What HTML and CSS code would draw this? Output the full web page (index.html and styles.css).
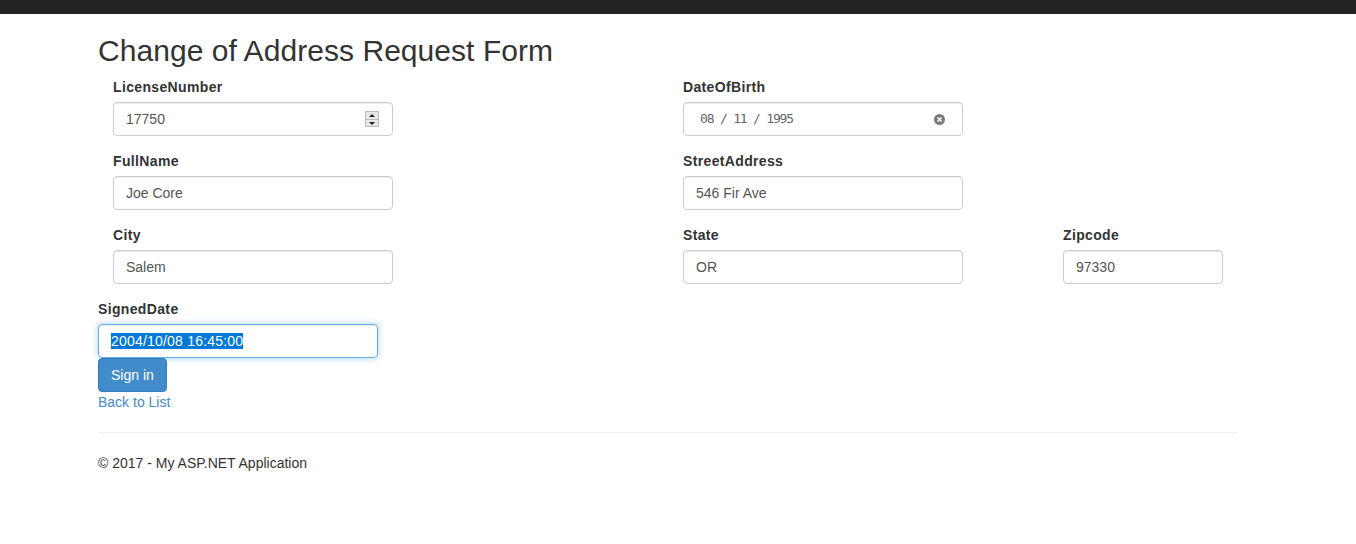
FILE: index.html
```html
<!DOCTYPE html>
<html>
<head>
<meta charset="utf-8">
<title>Change of Address Request Form</title>
<link rel="stylesheet" href="styles.css">
</head>
<body>
<div class="navbar"></div>
<div class="container">
  <h2 class="title">Change of Address Request Form</h2>
  <div class="row">
    <div class="col col-half">
      <label class="lbl">LicenseNumber</label>
      <div class="field">
        <span class="val">17750</span>
        <span class="spinner"><span class="spin-btn up"></span><span class="spin-btn down"></span></span>
      </div>
    </div>
    <div class="col col-half">
      <label class="lbl">DateOfBirth</label>
      <div class="field">
        <span class="date">08 / 11 / 1995</span>
        <span class="clear-icon">
          <svg width="11" height="11" viewBox="0 0 11 11"><circle cx="5.5" cy="5.5" r="5.5" fill="#7b7b7b"/><path d="M3.5 3.5 L7.5 7.5 M7.5 3.5 L3.5 7.5" stroke="#fff" stroke-width="1.6"/></svg>
        </span>
      </div>
    </div>
  </div>
  <div class="row">
    <div class="col col-half">
      <label class="lbl">FullName</label>
      <div class="field"><span class="val">Joe Core</span></div>
    </div>
    <div class="col col-half">
      <label class="lbl">StreetAddress</label>
      <div class="field"><span class="val">546 Fir Ave</span></div>
    </div>
  </div>
  <div class="row">
    <div class="col col-half">
      <label class="lbl">City</label>
      <div class="field"><span class="val">Salem</span></div>
    </div>
    <div class="col col-third">
      <label class="lbl">State</label>
      <div class="field"><span class="val">OR</span></div>
    </div>
    <div class="col col-zip">
      <label class="lbl">Zipcode</label>
      <div class="field field-small"><span class="val">97330</span></div>
    </div>
  </div>
  <div class="signed">
    <label class="lbl">SignedDate</label>
    <div class="field field-focus"><span class="selected">2004/10/08 16:45:00</span></div>
  </div>
  <button class="btn">Sign in</button>
  <div><a class="link" href="#">Back to List</a></div>
  <hr class="sep">
  <footer class="footer"><p>© 2017 - My ASP.NET Application</p></footer>
</div>
</body>
</html>
```
FILE: styles.css
```css
* { box-sizing: border-box; }
body {
  margin: 0;
  font-family: "Liberation Sans", Arial, sans-serif;
  font-size: 14px;
  line-height: 20px;
  color: #333;
  background: #fff;
}
.navbar { height: 14px; background: #222; }
.container { width: 1140px; margin-left: 98px; }
.title {
  margin: 20px 0 10px;
  font-size: 30px;
  line-height: 33px;
  font-weight: 500;
  color: #333;
  letter-spacing: 0.05px;
}
.row { display: flex; padding-left: 15px; }
.col { margin-bottom: 15px; flex-shrink: 0; }
.col-half { width: 570px; }
.col-third { width: 380px; }
.col-zip { width: 160px; }
.lbl {
  display: block;
  font-weight: bold;
  margin-bottom: 5px;
  height: 20px;
  letter-spacing: 0.35px;
}
.field {
  width: 280px;
  height: 34px;
  border: 1px solid #ccc;
  border-radius: 4px;
  padding: 6px 12px;
  color: #555;
  display: flex;
  align-items: center;
  box-shadow: inset 0 1px 1px rgba(0,0,0,0.075);
}
.field-small { width: 160px; }
.val { flex: 1; }
.spinner {
  display: flex;
  flex-direction: column;
  width: 14px;
  height: 16px;
  margin-right: 1px;
}
.spin-btn {
  flex: 1;
  background: #e8e8e8;
  border: 1px solid #bdbdbd;
  position: relative;
}
.spin-btn.up { border-bottom: none; }
.spin-btn::after {
  content: "";
  position: absolute;
  left: 3px;
  border-left: 3px solid transparent;
  border-right: 3px solid transparent;
}
.spin-btn.up::after { top: 2px; border-bottom: 3px solid #222; }
.spin-btn.down::after { top: 2px; border-top: 3px solid #222; }
.date {
  flex: 1;
  font-family: "DejaVu Sans Mono", "Liberation Mono", monospace;
  font-size: 13px;
  letter-spacing: -1.2px;
  color: #666;
  padding-left: 4px;
}
.clear-icon { display: flex; margin-right: 5px; }
.signed { margin-bottom: 0; }
.field-focus {
  border-color: #66afe9;
  box-shadow: inset 0 1px 1px rgba(0,0,0,0.075), 0 0 6px rgba(102,175,233,0.6);
}
.selected {
  background: #0078d7;
  color: #fff;
  line-height: 16px;
  letter-spacing: 0.2px;
}
.btn {
  display: block;
  height: 34px;
  padding: 6px 12px;
  font-family: inherit;
  font-size: 14px;
  line-height: 20px;
  color: #fff;
  background: #428bca;
  border: 1px solid #357ebd;
  border-radius: 4px;
  margin: 0;
}
.link { color: #428bca; text-decoration: none; }
.sep {
  margin: 20px 0;
  border: 0;
  border-top: 1px solid #eee;
  height: 0;
}
.footer p { margin: 0; }
```
